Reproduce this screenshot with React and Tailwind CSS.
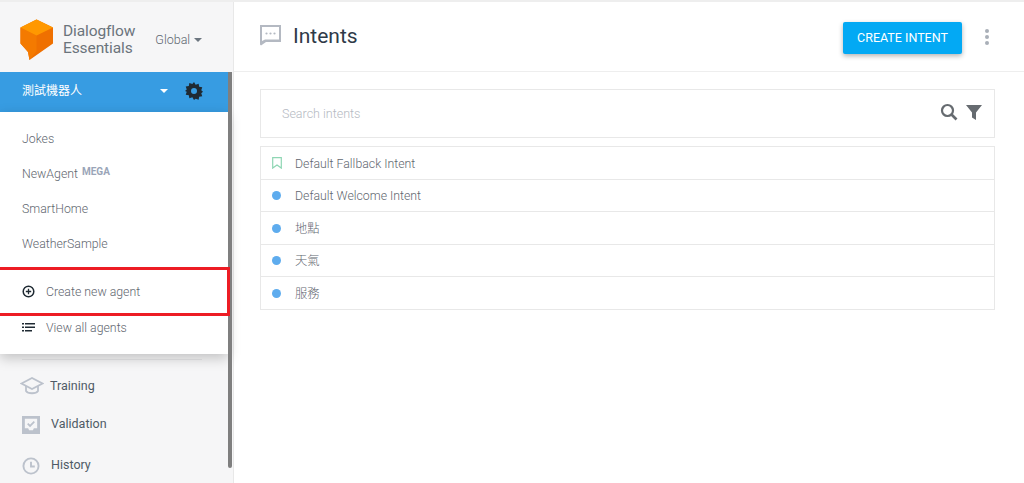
import React from 'react';

const agents = ['Jokes', 'NewAgent', 'SmartHome', 'WeatherSample'];
const intents = [
    { name: 'Default Welcome Intent', h: 'h-[32px]' },
    { name: '地點', h: 'h-[33px]' },
    { name: '天氣', h: 'h-[32px]' },
    { name: '服務', h: 'h-[33px]' },
];

function Logo() {
    return (
        <svg width="33" height="42" viewBox="0 0 33 42">
            <path d="M16.5 0.5 L33 8.5 V24.5 L9.5 41 L8 33 L0.5 24.5 V8.5 Z" fill="#ef7000" />
            <path d="M0.5 8.5 L16.5 16.5 V32 L9.5 41 L8 33 L0.5 24.5 Z" fill="#f47a00" />
            <path d="M16.5 0.5 L33 8.5 L16.5 16.5 L0.5 8.5 Z" fill="#ff9800" />
        </svg>
    );
}

function Gear() {
    return (
        <svg width="18" height="18" viewBox="0 0 24 24" fill="#1f2a33">
            <path fillRule="evenodd" d="M12 0l2.200 3.600 4-1.300.7 4.100 4.100.7-1.300 4 2.300 1.900-2.300 1.900 1.300 4-4.100.7-.7 4.100-4-1.300L12 24l-2.200-3.600-4 1.300-.7-4.100-4.100-.7 1.300-4L0 12l2.300-1.900-1.300-4 4.100-.7.7-4.100 4 1.300z M12 8a4 4 0 1 0 0 8 4 4 0 0 0 0-8z" />
        </svg>
    );
}

function NavItem({ icon, label, pad, h }) {
    return (
        <div className={`flex items-center ${h} ${pad} text-[12.5px] text-[#4f5b66]`}>
            {icon}
            <span>{label}</span>
        </div>
    );
}

export default function App() {
    return (
        <div className="font-['Roboto','Noto_Sans_CJK_TC',sans-serif] relative flex w-[1024px] h-[483px] overflow-hidden bg-white border-t-2 border-[#eeeeee]">
            <aside className="relative w-[234px] shrink-0 bg-[#f6f6f7] border-r border-[#e8e8e8] flex flex-col">
                <div className="h-[70px] shrink-0 flex items-center pl-[20px] pt-[6px]">
                    <Logo />
                    <div className="ml-[10px] text-[15.5px] leading-[17px] text-[#6b747c] tracking-[-0.1px]">
                        <div>Dialogflow</div>
                        <div>Essentials</div>
                    </div>
                    <div className="ml-[20px] flex items-center text-[12.5px] font-light text-[#5d6670]">
                        Global
                        <span className="ml-[4px] w-0 h-0 border-x-[4px] border-x-transparent border-t-[4px] border-t-[#6d7680]" />
                    </div>
                </div>
                <div className="w-[228px] h-[40px] shrink-0 bg-[#379ce2] flex items-center pl-[22px] pb-[2px] text-[12px] text-white">
                    <span className="flex-1">測試機器人</span>
                    <span className="w-0 h-0 border-x-[4px] border-x-transparent border-t-[4px] border-t-white mr-[17px]" />
                    <span className="mr-[25px]"><Gear /></span>
                </div>
                <div className="w-[228px] h-[242px] shrink-0 bg-white shadow-[0_4px_12px_rgba(0,0,0,0.22)] pt-[10px] text-[12.3px] font-light text-[#5f6770] relative z-10">
                    {agents.map((a) => (
                        <div key={a} className="h-[35px] flex items-center pl-[22px]">
                            {a}
                            {a === 'NewAgent' && <span className="ml-[4px] text-[10px] font-bold text-[#9aa5b8] -translate-y-[3px]">MEGA</span>}
                        </div>
                    ))}
                    <div className="mt-[12px] h-[36px] flex items-center pl-[22px]">
                        <svg className="-mt-[2px]" width="13" height="13" viewBox="0 0 13 13" fill="none" stroke="#1f2a33">
                            <circle cx="6.5" cy="6.5" r="5.3" strokeWidth="1.5" />
                            <path d="M6.500 3.800v5.400M3.800 6.500h5.400" strokeWidth="1.3" />
                        </svg>
                        <span className="ml-[11px]">Create new agent</span>
                    </div>
                    <div className="h-[36px] flex items-center pl-[22px]">
                        <svg className="-mt-[2px]" width="13" height="9" viewBox="0 0 13 9" fill="#1f2a33">
                            <rect x="0" y="0" width="2" height="1.5" />
                            <rect x="3" y="0" width="10" height="1.5" />
                            <rect x="0" y="3.5" width="2" height="1.5" />
                            <rect x="3" y="3.5" width="10" height="1.5" />
                            <rect x="0" y="7" width="2" height="1.5" />
                            <rect x="3" y="7" width="7" height="1.5" />
                        </svg>
                        <span className="ml-[11px]">View all agents</span>
                    </div>
                </div>
                <div className="mx-[22px] mt-[5px] w-[180px] shrink-0 border-t border-[#e6e6e8]" />
                <div className="pt-[7px] shrink-0">
                    <NavItem
                        h="h-[38px]"
                        pad="pl-[20px] gap-[6px]"
                        label="Training"
                        icon={
                            <svg width="24" height="18" viewBox="0 0 24 18" fill="none" stroke="#bcc2cc" strokeWidth="1.8">
                                <path d="M1.500 6.500L12 1l10.500 5.500L12 12z" />
                                <path d="M6 9v5c2 3 10 3 12 0V9" />
                            </svg>
                        }
                    />
                    <NavItem
                        h="h-[39px]"
                        pad="pl-[22px] gap-[11px]"
                        label="Validation"
                        icon={
                            <svg width="18" height="18" viewBox="0 0 19 19">
                                <rect width="19" height="19" fill="#bcc2cc" />
                                <path d="M3 3h13v10h-3.500l-1 2h-4l-1-2H3z" fill="#f6f6f7" />
                                <path d="M6 8l2.500 2.500L13 6" fill="none" stroke="#bcc2cc" strokeWidth="1.8" />
                            </svg>
                        }
                    />
                    <NavItem
                        h="h-[43px]"
                        pad="pl-[22px] gap-[11px]"
                        label="History"
                        icon={
                            <svg width="18" height="18" viewBox="0 0 19 19" fill="none" stroke="#bcc2cc" strokeWidth="2">
                                <circle cx="9.5" cy="9.5" r="8" />
                                <path d="M9.500 5v5h4" />
                            </svg>
                        }
                    />
                </div>
                {/* scrollbar thumb */}
                <div className="absolute left-[228px] top-[70px] w-[4px] h-[396px] bg-[#7f7f7f] rounded-b-sm z-20" />
                {/* red highlight over the menu item */}
                <div className="absolute left-0 top-[265px] w-[230px] h-[49px] border-y-[3px] border-r-[3px] border-[#ed1c24] z-20" />
            </aside>
            <main className="flex-1 min-w-0">
                <header className="h-[70px] border-b border-[#eeeeee] flex items-center pl-[25px] pr-[35px]">
                    <svg className="-mt-[4px]" width="22" height="22" viewBox="0 0 22 22">
                        <path fillRule="evenodd" d="M1 1h21v17H7l-5 3.500-1-1zM3 3v14l3-1.500h14V3z" fill="#b4b9c2" />
                        <circle cx="7.5" cy="9.5" r="1.1" fill="#b4b9c2" />
                        <circle cx="11.5" cy="9.5" r="1.1" fill="#b4b9c2" />
                        <circle cx="15.5" cy="9.5" r="1.1" fill="#b4b9c2" />
                    </svg>
                    <h1 className="ml-[12px] text-[21px] text-[#2f3a48] flex-1">Intents</h1>
                    <button className="mt-[2px] pt-[2px] w-[119px] h-[32px] bg-[#03a9f4] rounded-[2px] text-white text-[12.5px] shadow-[0_2px_5px_rgba(0,0,0,0.3)]">CREATE INTENT</button>
                    <div className="ml-[23px] flex flex-col gap-[2px]">
                        <span className="w-[4px] h-[4px] rounded-full bg-[#a9afb8]" />
                        <span className="w-[4px] h-[4px] rounded-full bg-[#a9afb8]" />
                        <span className="w-[4px] h-[4px] rounded-full bg-[#a9afb8]" />
                    </div>
                </header>
                <div className="pl-[26px] pr-[29px] pt-[17px]">
                    <div className="h-[49px] border border-[#e8e8e8] flex items-center pl-[21px] pr-[12px] text-[12.5px] font-light text-[#b5bac2]">
                        <span className="flex-1 pt-[2px]">Search intents</span>
                        <svg className="mb-[4px]" width="18" height="18" viewBox="0 0 18 18" fill="none" stroke="#666b70" strokeWidth="2.2">
                            <circle cx="7.5" cy="7.5" r="5.5" />
                            <path d="M11.500 11.500l5 5" strokeWidth="2.6" />
                        </svg>
                        <svg className="ml-[8px] mb-[4px]" width="16" height="16" viewBox="0 0 16 16" fill="#666b70">
                            <path d="M0 1h16L10 8.500V16l-4-2.500v-5z" />
                        </svg>
                    </div>
                    <div className="mt-[8px] border border-[#e8e8e8] text-[12.3px] font-light text-[#5f6770]">
                        <div className="h-[32px] flex items-center pl-[11px]">
                            <svg width="10" height="12" viewBox="0 0 10 12" fill="none" stroke="#8fd6b4" strokeWidth="1.2">
                                <path d="M.7.700h8.600v10.400L5 8 .7 11.100z" />
                            </svg>
                            <span className="ml-[13px] pt-[3px]">Default Fallback Intent</span>
                        </div>
                        {intents.map((t) => (
                            <div key={t.name} className={`${t.h} border-t border-[#e8e8e8] flex items-center pl-[11px]`}>
                                <span className="w-[9px] h-[9px] rounded-full bg-[#5eacee]" />
                                <span className="ml-[14px] pt-[2px]">{t.name}</span>
                            </div>
                        ))}
                    </div>
                </div>
            </main>
        </div>
    );
}
